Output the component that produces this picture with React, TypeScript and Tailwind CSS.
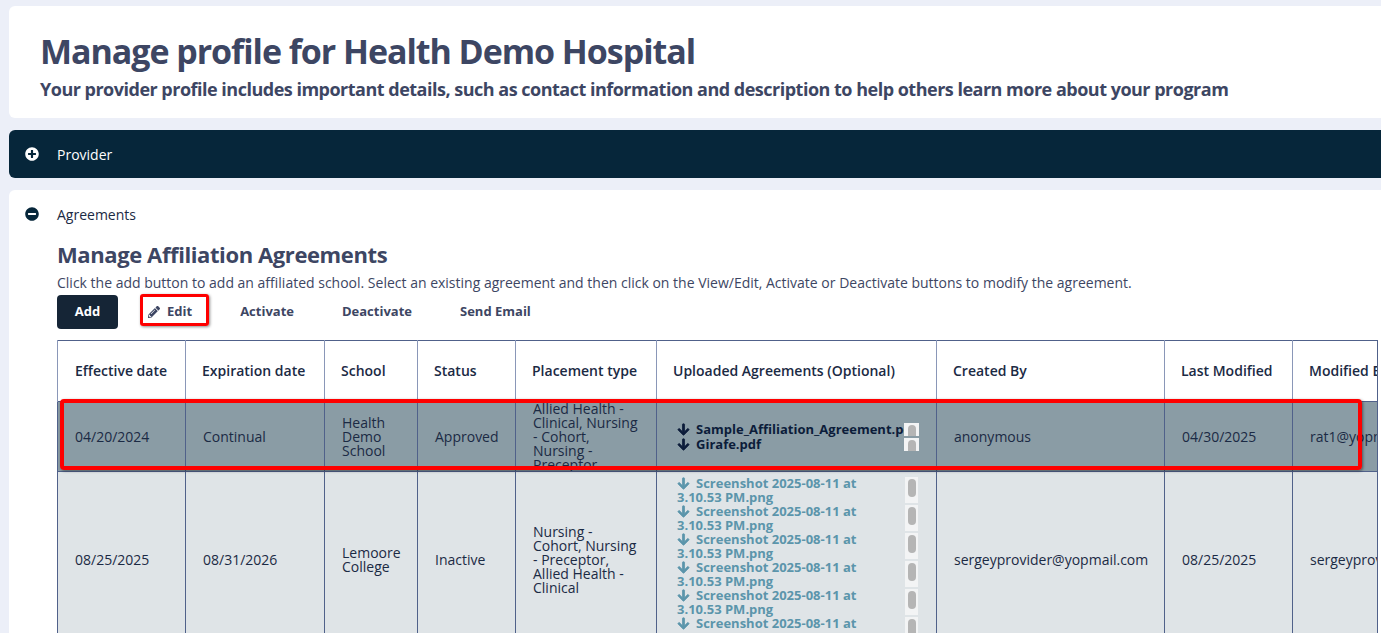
import { FaArrowDown, FaMinusCircle, FaPencilAlt, FaPlusCircle } from "react-icons/fa";

const columns = [128, 139, 93, 98, 141, 280, 228, 128, 170];

const headers = [
  "Effective date",
  "Expiration date",
  "School",
  "Status",
  "Placement type",
  "Uploaded Agreements (Optional)",
  "Created By",
  "Last Modified",
  "Modified By",
];

const screenshots = [1, 2, 3, 4, 5, 6];

function FileRow({ name, tall }: { name: string; tall?: boolean }) {
  return (
    <div className={tall ? "flex h-[28px] items-start" : "flex h-[15px] items-start"}>
      <div className={tall ? "w-[228px] pr-[14px] text-[13px] leading-[14px] font-bold" : "w-[227px] overflow-hidden text-[13px] leading-[15px] font-bold whitespace-nowrap"}>
        <FaArrowDown className="mr-[6px] inline-block h-[13px] w-[13px] stroke-[30] align-[-2px]" />
        {name}
      </div>
      <div className={tall ? "mt-[1px] flex h-[26px] w-[13px] justify-center bg-[#f3f4f5] pt-[2px]" : "mt-[1px] flex h-[13px] w-[15px] justify-center overflow-hidden bg-[#f3f4f5] pt-[2px]"}>
        <div className="h-[18px] w-[8px] shrink-0 rounded-full bg-[#b5b5b5]" />
      </div>
    </div>
  );
}

export default function App() {
  return (
    <div className="relative h-[633px] w-[1381px] overflow-hidden bg-[#eceff8] pt-[6px] pl-[9px] font-['Open_Sans',sans-serif] text-[#3d4663]">
      <div className="h-[112px] rounded-l-md bg-white pt-[24px] pl-[31px]">
        <h1 className="text-[34px] leading-[42px] font-bold tracking-[-1.05px]">Manage profile for Health Demo Hospital</h1>
        <p className="mt-[5px] text-[18px] leading-[24px] font-bold tracking-[-0.5px]">
          Your provider profile includes important details, such as contact information and description to help others learn more about your program
        </p>
      </div>

      <div className="mt-[12px] flex h-[48px] items-center rounded-l-md bg-[#06263a] pl-[16px] text-[14px] text-white">
        <FaPlusCircle className="h-[14px] w-[14px]" />
        <span className="ml-[18px]">Provider</span>
      </div>

      <div className="mt-[12px] h-[460px] rounded-l-md bg-white pl-[16px]">
        <div className="flex h-[48px] items-center text-[14px] text-[#1b2a44]">
          <FaMinusCircle className="h-[14px] w-[14px] text-[#06263a]" />
          <span className="ml-[18px]">Agreements</span>
        </div>

        <div className="ml-[32px]">
          <h2 className="mt-[1px] text-[22px] leading-[30px] font-bold tracking-[-0.4px]">Manage Affiliation Agreements</h2>
          <p className="mt-[4px] text-[14px] leading-[20px]">
            Click the add button to add an affiliated school. Select an existing agreement and then click on the View/Edit, Activate or Deactivate buttons to modify the agreement.
          </p>

          <div className="mt-[2px] flex h-[34px] items-center text-[13px] font-bold">
            <button className="h-[34px] w-[61px] rounded bg-[#152536] text-white">Add</button>
            <button className="ml-[30px] flex items-center">
              <FaPencilAlt className="h-[12px] w-[12px]" />
              <span className="ml-[7px]">Edit</span>
            </button>
            <button className="ml-[48px]">Activate</button>
            <button className="ml-[48px]">Deactivate</button>
            <button className="ml-[48px]">Send Email</button>
          </div>

          <div className="mt-[11px] w-[1321px] overflow-hidden border-r border-[#50618a]">
            <table className="w-[1405px] table-fixed border-collapse text-[14px] leading-[14px] text-[#1b2a44]">
              <colgroup>
                {columns.map((width, i) => (
                  <col key={i} style={{ width }} />
                ))}
              </colgroup>
              <thead>
                <tr className="h-[61px] border-t border-[#50618a]">
                  {headers.map((header, i) => (
                    <th key={header} className={i === 0 ? "border-x border-[#8a97b8] pl-[17px] text-left font-semibold whitespace-nowrap" : "border-x border-[#8a97b8] pl-[16px] text-left font-semibold whitespace-nowrap"}>
                      {header}
                    </th>
                  ))}
                </tr>
              </thead>
              <tbody>
                <tr className="h-[70px] border-y border-[#50618a] bg-[#8a9ca5]">
                  <td className="border-x border-[#50618a] pl-[17px]">04/20/2024</td>
                  <td className="border-x border-[#50618a] pl-[17px]">Continual</td>
                  <td className="border-x border-[#50618a] pl-[17px]">Health Demo School</td>
                  <td className="border-x border-[#50618a] pl-[17px]">Approved</td>
                  <td className="border-x border-[#50618a] pl-[17px]">
                    <div className="h-[69px] overflow-hidden pr-[14px]">
                      Allied Health - Clinical, Nursing - Cohort, Nursing - Preceptor
                    </div>
                  </td>
                  <td className="border-x border-[#50618a] pl-[20px] text-[#0c1c3a]">
                    <FileRow name="Sample_Affiliation_Agreement.pdf" />
                    <FileRow name="Girafe.pdf" />
                  </td>
                  <td className="border-x border-[#50618a] pl-[17px]">anonymous</td>
                  <td className="border-x border-[#50618a] pl-[17px]">04/30/2025</td>
                  <td className="border-x border-[#50618a] pl-[17px] whitespace-nowrap">rat1@yopmail.com</td>
                </tr>
                <tr className="h-[176px] bg-[#dfe4e7]">
                  <td className="border-x border-[#50618a] pl-[17px]">08/25/2025</td>
                  <td className="border-x border-[#50618a] pl-[17px]">08/31/2026</td>
                  <td className="border-x border-[#50618a] pl-[17px]">Lemoore College</td>
                  <td className="border-x border-[#50618a] pl-[17px]">Inactive</td>
                  <td className="border-x border-[#50618a] pr-[14px] pl-[17px]">
                    Nursing - Cohort, Nursing - Preceptor, Allied Health - Clinical
                  </td>
                  <td className="border-x border-[#50618a] pl-[20px] text-[#5b95ab]">
                    {screenshots.map((id) => (
                      <FileRow key={id} name="Screenshot 2025-08-11 at 3.10.53 PM.png" tall />
                    ))}
                  </td>
                  <td className="border-x border-[#50618a] pl-[17px]">sergeyprovider@yopmail.com</td>
                  <td className="border-x border-[#50618a] pl-[17px]">08/25/2025</td>
                  <td className="border-x border-[#50618a] pl-[17px] whitespace-nowrap">sergeyprovider@yopmail.com</td>
                </tr>
              </tbody>
            </table>
          </div>
        </div>
      </div>

      {/* red annotation boxes drawn over the screenshot */}
      <div className="absolute top-[294px] left-[140px] h-[32px] w-[69px] rounded-[3px] border-[3px] border-[#fe0000] shadow-[1px_1px_3px_rgba(0,0,0,0.45)]" />
      <div className="absolute top-[399px] left-[60px] h-[71px] w-[1302px] rounded-[4px] border-[4px] border-[#fe0000] shadow-[1px_1px_3px_rgba(0,0,0,0.45)]" />
    </div>
  );
}
